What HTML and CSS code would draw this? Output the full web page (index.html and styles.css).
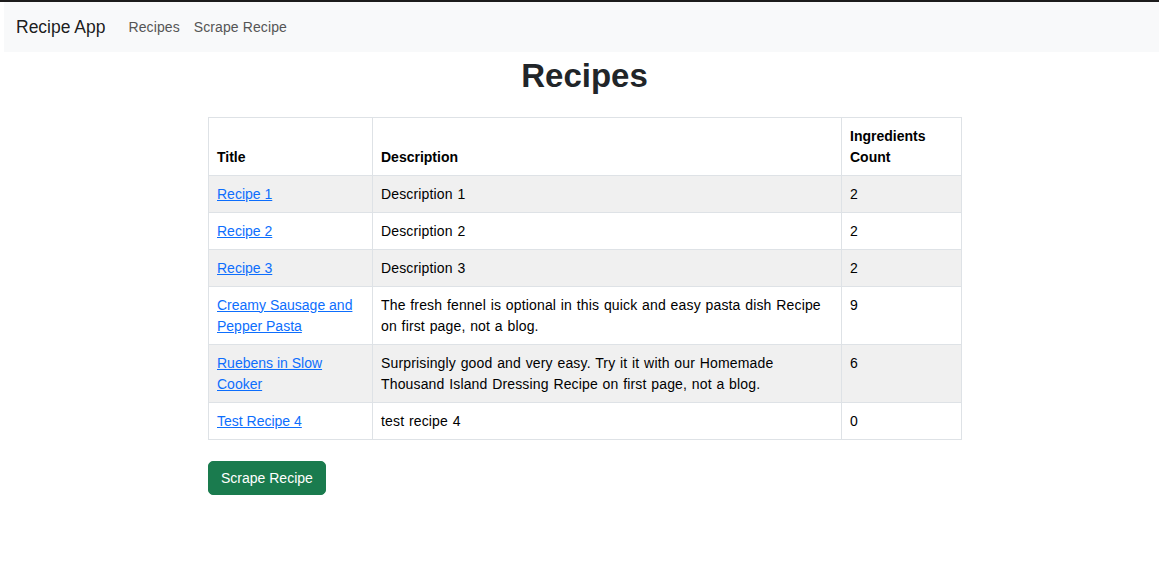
FILE: index.html
```html
<!DOCTYPE html>
<html lang="en">
<head>
<meta charset="utf-8">
<title>Recipe App</title>
<link rel="stylesheet" href="styles.css">
</head>
<body>
<div class="topline"></div>
<nav class="navbar">
  <a class="brand" href="#">Recipe App</a>
  <a class="nav-link" href="#">Recipes</a>
  <a class="nav-link" href="#">Scrape Recipe</a>
</nav>
<main class="content">
  <h1 class="title">Recipes</h1>
  <table class="recipes">
    <colgroup>
      <col class="c1"><col class="c2"><col class="c3">
    </colgroup>
    <thead>
      <tr><th>Title</th><th>Description</th><th>Ingredients Count</th></tr>
    </thead>
    <tbody>
      <tr><td><a href="#">Recipe 1</a></td><td class="desc">Description 1</td><td>2</td></tr>
      <tr><td><a href="#">Recipe 2</a></td><td class="desc">Description 2</td><td>2</td></tr>
      <tr><td><a href="#">Recipe 3</a></td><td class="desc">Description 3</td><td>2</td></tr>
      <tr><td><a href="#">Creamy Sausage and Pepper Pasta</a></td><td class="desc">The fresh fennel is optional in this quick and easy pasta dish Recipe on first page, not a blog.</td><td>9</td></tr>
      <tr><td><a href="#">Ruebens in Slow Cooker</a></td><td class="desc">Surprisingly good and very easy. Try it it with our Homemade Thousand Island Dressing Recipe on first page, not a blog.</td><td>6</td></tr>
      <tr><td><a href="#">Test Recipe 4</a></td><td class="desc">test recipe 4</td><td>0</td></tr>
    </tbody>
  </table>
  <button class="btn-success" type="button">Scrape Recipe</button>
</main>
</body>
</html>
```
FILE: styles.css
```css
html, body {
  margin: 0;
  padding: 0;
  background: #fff;
}
body {
  font-family: "Liberation Sans", Arial, sans-serif;
  font-size: 14px;
  line-height: 1.5;
  color: #212529;
}
.topline {
  height: 2px;
  background: #1c1c1c;
}
.navbar {
  margin-left: 4px;
  height: 50px;
  background: #f8f9fa;
  display: flex;
  align-items: center;
  padding-left: 12px;
}
.brand {
  font-size: 17.5px;
  color: rgba(0,0,0,.9);
  text-decoration: none;
  margin-right: 23px;
}
.nav-link {
  font-size: 14px;
  letter-spacing: 0.1px;
  color: #555;
  text-decoration: none;
  margin-right: 14px;
}
.content {
  width: 753px;
  margin-left: 208px;
}
.title {
  margin: 4px 0 21px;
  text-align: center;
  font-size: 33px;
  font-weight: bold;
  line-height: 1.2;
  color: #212529;
}
.recipes {
  width: 753px;
  border-collapse: collapse;
  table-layout: fixed;
  color: #000;
}
.c1 { width: 164px; }
.c2 { width: 469px; }
.c3 { width: 120px; }
.recipes th, .recipes td {
  border: 1px solid #dee2e6;
  padding: 8px 8px 7px;
  text-align: left;
  vertical-align: top;
  line-height: 21px;
}
.recipes td.desc {
  letter-spacing: 0.15px;
  word-spacing: 0.7px;
}
.recipes th {
  vertical-align: bottom;
  font-weight: bold;
}
.recipes tbody tr:nth-child(odd) td {
  background: #f0f0f0;
}
.recipes a {
  color: #0d6efd;
  text-decoration: underline;
}
.btn-success {
  margin-top: 21px;
  background: #1a7b4e;
  color: #fff;
  border: 1px solid #1a7b4e;
  border-radius: 5px;
  padding: 6px 12px;
  font-family: "Liberation Sans", Arial, sans-serif;
  font-size: 14px;
  line-height: 20px;
  white-space: nowrap;
}
```
